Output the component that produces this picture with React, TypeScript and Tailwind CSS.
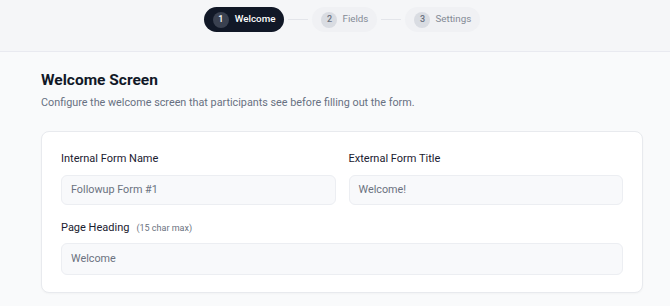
import React from "react";

function Step({ n, label, active }: { n: number; label: string; active?: boolean }) {
  return active ? (
    <div className="flex h-[25px] items-center gap-[6px] rounded-full bg-[#111827] pl-[9px] pr-[9px]">
      <span className="flex h-4 w-4 items-center justify-center rounded-full bg-[#3a4150] text-[9px] font-medium text-white">{n}</span>
      <span className="text-[9.8px] font-medium text-white">{label}</span>
    </div>
  ) : (
    <div className="flex h-[25px] items-center gap-[5px] rounded-full bg-[#f0f1f4] pl-[9px] pr-[9px]">
      <span className="flex h-4 w-4 items-center justify-center rounded-full bg-[#d9dce2] text-[9px] font-medium text-[#6b7280]">{n}</span>
      <span className="text-[9.8px] text-[#858b96]">{label}</span>
    </div>
  );
}

export default function App() {
  return (
    <div className="min-h-[306px] w-[670px] bg-[#f9fafb]" style={{ fontFamily: "Roboto, 'Noto Sans', sans-serif" }}>
      <div className="flex h-[52px] justify-center border-b border-[#e9eaf0] bg-[#f5f6f8] pl-[14px] pt-[7px]">
        <div className="flex h-[25px] items-center">
          <Step n={1} label="Welcome" active />
          <div className="mx-1 h-px w-5 bg-[#e3e5ea]" />
          <Step n={2} label="Fields" />
          <div className="mx-1 h-px w-5 bg-[#e3e5ea]" />
          <Step n={3} label="Settings" />
        </div>
      </div>
      <div className="pl-[41px] pr-[27px] pt-[17px]">
        <h1 className="text-[15.5px] font-bold leading-[22px] text-[#111827]">Welcome Screen</h1>
        <p className="mt-[4px] text-[10.8px] leading-[16px] text-[#687182]">
          Configure the welcome screen that participants see before filling out the form.
        </p>
        <div className="mt-[20px] rounded-[8px] border border-[#e8eaee] bg-white px-[19px] pb-[17px] pt-[19px] shadow-[0_1px_2px_rgba(0,0,0,0.03)]">
          <div className="grid grid-cols-2 gap-x-[13px]">
            <div>
              <div className="text-[11px] leading-4 text-[#1a2030]">Internal Form Name</div>
              <div className="mt-2 flex h-[30px] items-center rounded-[6px] border border-[#eceef2] bg-[#f8f9fb] px-[9px] text-[10.8px] text-[#6b7280]">Followup Form #1</div>
            </div>
            <div>
              <div className="text-[11px] leading-4 text-[#1a2030]">External Form Title</div>
              <div className="mt-2 flex h-[30px] items-center rounded-[6px] border border-[#eceef2] bg-[#f8f9fb] px-[9px] text-[10.8px] text-[#6b7280]">Welcome!</div>
            </div>
          </div>
          <div className="mt-[15px] flex items-baseline gap-[7px]">
            <span className="text-[11px] leading-4 text-[#1a2030]">Page Heading</span>
            <span className="text-[9px] text-[#6b7280]">(15 char max)</span>
          </div>
          <div className="mt-[7px] flex h-[32px] items-center rounded-[6px] border border-[#eceef2] bg-[#f8f9fb] px-[9px] text-[10.8px] text-[#6b7280]">Welcome</div>
        </div>
      </div>
    </div>
  );
}
